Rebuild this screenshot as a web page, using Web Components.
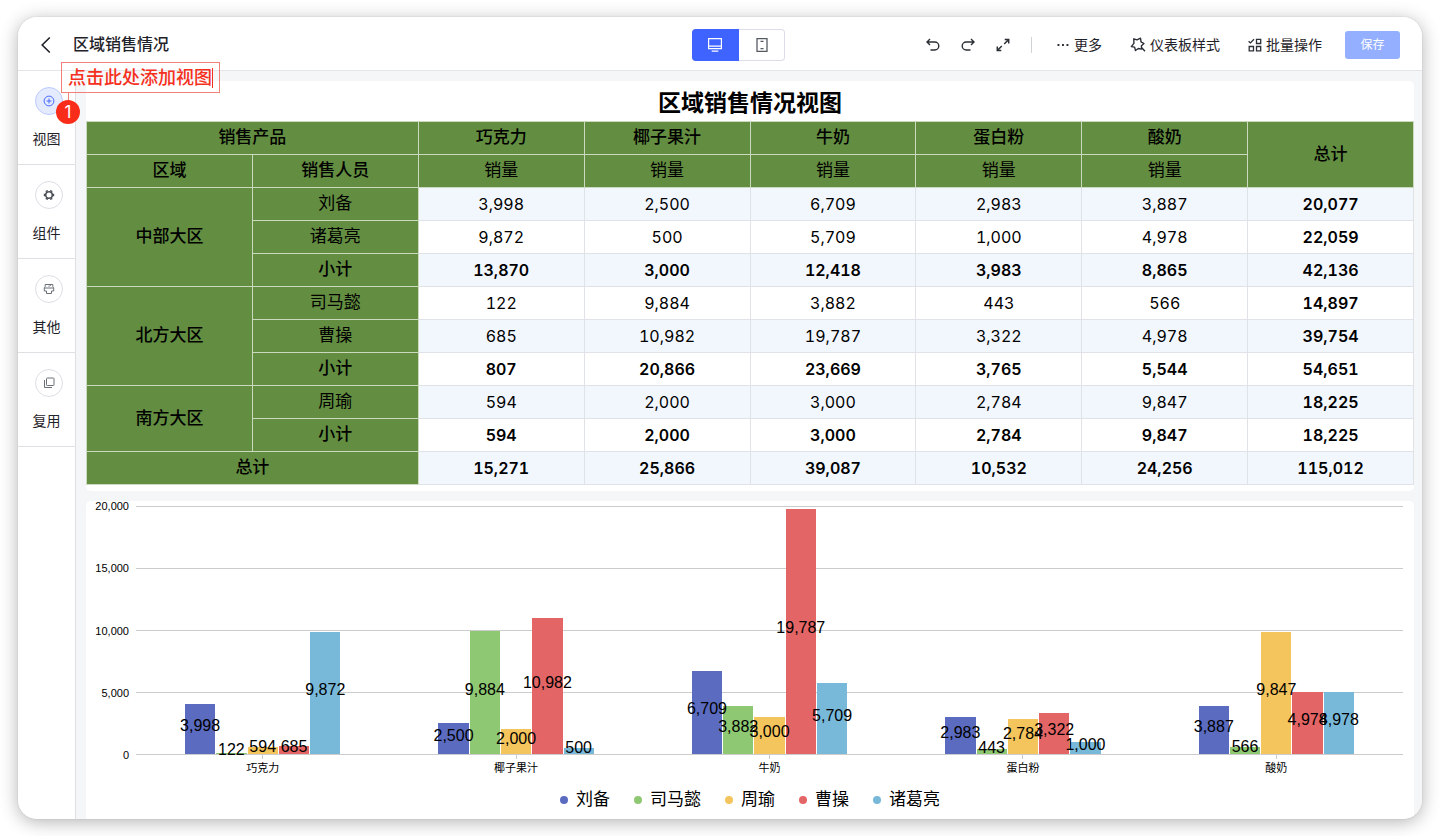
<!DOCTYPE html>
<html lang="zh-CN">
<head>
<meta charset="utf-8">
<meta name="viewport" content="width=device-width, initial-scale=1">
<title>区域销售情况</title>
<style>
  body {
    margin: 0;
    background: #fff;
    color: #1f2329;
    font-family: "Liberation Sans", "Noto Sans CJK SC", sans-serif;
    font-size: 14px;
    line-height: 20px;
  }
</style>
</head>
<body>
<dashboard-app></dashboard-app>

<template id="dashboard-app">
  <style>
    :host { display: flex; box-sizing: border-box; min-height: 100vh; padding: 17px 18px; }
    .window {
      flex: 1; min-width: 0; display: flex; flex-direction: column; overflow: hidden;
      border-radius: 19px; background: #fff;
      box-shadow: 0 0 1px rgba(0,0,0,.3), 0 3px 18px rgba(0,0,0,.3);
    }
    .body { flex: 1; display: flex; min-height: 0; }
    nav { flex: none; width: 57px; border-right: 1px solid #dee0e3; background: #fff; }
    main {
      flex: 1; min-width: 0; display: flex; flex-direction: column; gap: 10px;
      padding: 10px 8px 0 10px; background: #f5f6f8;
    }
  </style>
  <div class="window">
    <app-header></app-header>
    <div class="body">
      <nav aria-label="添加">
        <side-item active>
          <svg slot="icon" width="12" height="12" viewBox="0 0 12 12" fill="none" stroke="#4a6bff" stroke-width="1"><circle cx="6" cy="6" r="4.9"/><path d="M6 3.500v5M3.500 6h5"/></svg>
          视图
        </side-item>
        <side-item>
          <svg slot="icon" width="12" height="12" viewBox="0 0 12 12" fill="none" stroke="#4b5058"><circle cx="6" cy="6" r="3.300" stroke-width="1.600"/><path stroke-width="2.400" d="M3.400 1.500l.7 1.200M8.600 1.500l-.7 1.200M3.400 10.500l.7-1.200M8.600 10.500l-.7-1.200M.8 6h1.500M9.700 6h1.500"/></svg>
          组件
        </side-item>
        <side-item>
          <svg slot="icon" width="12" height="12" viewBox="0 0 12 12" fill="none" stroke="#6b7078" stroke-width="1" stroke-linejoin="round"><path d="M2.200 1.500h7.600v2.300l.9.900V8H8.500v2.500h-5V8H1.300V4.700l.9-.9zM1.500 5h9M5.500 3.200h1l1.500-1.500"/></svg>
          其他
        </side-item>
        <side-item>
          <svg slot="icon" width="12" height="12" viewBox="0 0 12 12" fill="none" stroke="#6b7078" stroke-width="1"><rect x="3.500" y="1" width="7.500" height="7.500" rx=".8"/><path d="M1.500 3v7.500h7.500"/></svg>
          复用
        </side-item>
      </nav>
      <main>
        <pivot-table></pivot-table>
        <bar-chart></bar-chart>
      </main>
    </div>
  </div>
  <step-callout step="1">点击此处添加视图</step-callout>
</template>

<template id="app-header">
  <style>
    :host {
      flex: none; display: flex; align-items: center; box-sizing: border-box; height: 54px;
      padding-top: 2px; border-bottom: 1px solid #e3e5e8; background: #fff;
    }
    button { margin: 0; padding: 0; border: 0; background: none; font: inherit; color: inherit; display: flex; align-items: center; justify-content: center; }
    svg { display: block; }
    .lead { flex: none; box-sizing: border-box; width: 48%; padding-left: 20px; display: flex; align-items: center; gap: 19px; }
    h1 { margin: 0; font-size: 16px; line-height: 24px; font-weight: 500; }
    .device { flex: none; display: flex; border-radius: 4px; overflow: hidden; box-shadow: inset 0 0 0 1px #dcdde8; }
    .device button { width: 46px; height: 32px; }
    .device .on { width: 47px; background: #3e63ff; }
    .tools { margin-left: auto; padding-right: 22px; display: flex; align-items: center; }
    .history { display: flex; gap: 19px; }
    .rule { width: 1px; height: 16px; margin: 0 24px 0 20px; background: #d0d3d6; }
    .actions { display: flex; gap: 28px; }
    .actions button { gap: 4px; }
    .save { width: 55px; height: 28px; margin-left: 23px; border-radius: 3px; background: #94afff; color: #fff; font-size: 12px; }
  </style>
  <div class="lead">
    <button type="button" aria-label="返回">
      <svg width="16" height="18" viewBox="0 0 16 18" fill="none" stroke="#1f2329" stroke-width="1.600"><path d="M11.800 1.500 4.200 9l7.600 7.500"/></svg>
    </button>
    <h1>区域销售情况</h1>
  </div>
  <div class="device" role="group" aria-label="预览设备">
    <button type="button" class="on" aria-label="电脑端" aria-pressed="true">
      <svg width="14" height="14" viewBox="0 0 14 14" fill="none" stroke="#fff" stroke-width="1.200"><path d="M.6.700h12.800v10H.6zM.6 8.200h12.800M3.700 13.200h6.600"/></svg>
    </button>
    <button type="button" aria-label="手机端" aria-pressed="false">
      <svg width="12" height="14" viewBox="0 0 12 14" fill="none" stroke="#555a61" stroke-width="1.300"><path d="M1 .7h10v12.600H1zM4.500 3.400h3M4.500 10.700h3"/></svg>
    </button>
  </div>
  <div class="tools">
    <div class="history">
      <button type="button" aria-label="撤销">
        <svg width="16" height="16" viewBox="0 0 16 16" fill="none" stroke="#2b2f36" stroke-width="1.400"><path d="M5 2 2 5l3 3M2.200 5h7.600a4 4 0 0 1 0 8H5.500"/></svg>
      </button>
      <button type="button" aria-label="重做">
        <svg width="16" height="16" viewBox="0 0 16 16" fill="none" stroke="#2b2f36" stroke-width="1.400"><path d="m11 2 3 3-3 3M13.800 5H6.200a4 4 0 0 0 0 8h4.300"/></svg>
      </button>
      <button type="button" aria-label="全屏">
        <svg width="16" height="16" viewBox="0 0 16 16" fill="none" stroke="#2b2f36" stroke-width="1.500"><path d="M9.700 2.500h4v4M13.700 2.500 9.200 7M6.300 13.500h-4v-4M2.300 13.500 6.800 9"/></svg>
      </button>
    </div>
    <span class="rule"></span>
    <div class="actions">
      <button type="button">
        <svg width="14" height="14" viewBox="0 0 14 14" fill="#2b2f36"><path d="M1.500 6h1.900v1.900H1.500zM6 6h1.900v1.900H6zM10.500 6h1.900v1.900h-1.900z"/></svg>
        <span>更多</span>
      </button>
      <button type="button">
        <svg width="16" height="16" viewBox="0 0 16 16" fill="none" stroke="#2b2f36" stroke-width="1.400" stroke-linejoin="round"><path d="m3.800 1.800 3.200 1.100 3.500-1.700.5 3.600 3 1.700-2.600 2.200.2 3.400-3.300-.6-2.800 2-.9-3.400-3.300-.5 2.600-3.200zM11.300 10.300l3.700 3.900"/></svg>
        <span>仪表板样式</span>
      </button>
      <button type="button">
        <svg width="14" height="14" viewBox="0 0 14 14" fill="none" stroke="#2b2f36" stroke-width="1.300"><path d="m.6 3.200 1.800 1.700L6 1.300M8.500 1.300h4.200v4.200H8.500zM1.200 8.500h4.300v4.300H1.200zM8.500 8.500h4.200v4.300H8.500z"/></svg>
        <span>批量操作</span>
      </button>
    </div>
    <button type="button" class="save">保存</button>
  </div>
</template>

<template id="side-item">
  <style>
    :host { display: block; box-sizing: border-box; height: 94px; border-bottom: 1px solid #dee0e3; }
    button {
      box-sizing: border-box; width: 100%; height: 100%; margin: 0; padding: 16px 0 10px; border: 0; background: none;
      font: inherit; color: inherit; display: flex; flex-direction: column; align-items: center; gap: 14px;
    }
    .ring {
      box-sizing: border-box; width: 28px; height: 28px; margin-left: 4px; border: 1px solid #dcdee6; border-radius: 50%;
      display: flex; align-items: center; justify-content: center;
    }
    :host([active]) .ring { background: #e4ebff; border-color: #bccbff; }
  </style>
  <button type="button"><span class="ring"><slot name="icon"></slot></span><span><slot></slot></span></button>
</template>

<template id="pivot-table">
  <style>
    :host { display: block; padding-bottom: 6px; border-radius: 5px; background: #fff; color: #000; }
    h2 { margin: 0; padding: 6px 0 2px; font-size: 23px; line-height: 32px; font-weight: 700; text-align: center; }
    table { width: 100%; table-layout: fixed; border-collapse: collapse; font-size: 17px; line-height: 24px; text-align: center; }
    th, td { box-sizing: border-box; height: 33px; padding: 0; border: 1px solid #dfe2e6; }
    th { background: #638e41; border-color: #cbd9bf; font-weight: 500; }
    th.plain { font-weight: 400; }
    td { font-family: Inter, "Noto Sans CJK SC", sans-serif; font-size: 16px; font-variant-numeric: tabular-nums; }
    tbody tr:nth-child(odd) td { background: #f2f7fe; }
    .sum td, td:last-child { font-weight: 600; }
  </style>
  <h2>区域销售情况视图</h2>
  <table aria-label="区域销售情况视图"><thead></thead><tbody></tbody></table>
</template>

<template id="bar-chart">
  <style>
    :host { flex: 1; display: block; padding: 5px 11px 0 0; border-radius: 5px 5px 0 0; background: #fff; color: #000; }
    .chart { display: grid; grid-template-columns: 43px 1fr; column-gap: 7px; }
    .scale { display: flex; flex-direction: column; justify-content: space-between; margin: -7px 0; font-size: 11px; line-height: 14px; text-align: right; }
    .plot { display: flex; height: 249px; background: repeating-linear-gradient(to top, #ccc 0 1px, transparent 1px 62px); }
    .group { flex: 1; display: flex; align-items: flex-end; gap: 1px; padding: 0 49px 1px; }
    .bar { position: relative; flex: 1; background: var(--tone); }
    .bar span {
      position: absolute; z-index: 1; top: 50%; left: 50%; transform: translate(-50%, -50%);
      padding-bottom: 6px; font-size: 16px; line-height: 20px;
    }
    .names { grid-column: 2; display: flex; font-size: 11px; line-height: 18px; text-align: center; }
    .names div { flex: 1; display: flex; flex-direction: column; align-items: center; }
    .names div::before { content: ""; width: 1px; height: 4px; background: #ccc; }
    .legend { display: flex; justify-content: center; gap: 24px; margin: 10px 0 0 11px; padding: 0 0 6px; list-style: none; font-size: 17px; line-height: 26px; }
    .legend li { display: flex; align-items: center; gap: 8px; }
    .legend li::before { content: ""; width: 8px; height: 8px; border-radius: 50%; background: var(--tone); }
  </style>
  <div class="chart">
    <div class="scale"></div>
    <div class="plot"></div>
    <div class="names"></div>
  </div>
  <ul class="legend"></ul>
</template>

<template id="step-callout">
  <style>
    :host { position: absolute; top: 62px; left: 61px; color: #f5301c; }
    .note { display: flex; align-items: center; box-sizing: border-box; height: 31px; padding: 0 6px; border: 1px solid #f08078; font-size: 18px; line-height: 28px; font-weight: 500; }
    .note::after { content: ""; width: 1px; height: 20px; background: currentColor; }
    .pin { display: flex; flex-direction: column; align-items: center; width: 24px; margin-left: -5px; }
    .pin::before { content: ""; width: 1px; height: 7px; background: #f08078; }
    .pin b { width: 24px; height: 24px; border-radius: 50%; background: #f92c19; color: #fff; font: 400 17px/24px Inter, sans-serif; text-align: center; }
  </style>
  <div class="note"><slot></slot></div>
  <div class="pin"><b></b></div>
</template>

<script>
  class TemplateElement extends HTMLElement {
    constructor() {
      super();
      const template = document.getElementById(this.constructor.tag);
      this.attachShadow({ mode: "open" }).append(template.content.cloneNode(true));
    }
    find(selector) { return this.shadowRoot.querySelector(selector); }
    static register(tag) { this.tag = tag; customElements.define(tag, this); }
  }

  const products = ["巧克力", "椰子果汁", "牛奶", "蛋白粉", "酸奶"];
  const rows = [
    { area: "中部大区", span: 3, name: "刘备", values: [3998, 2500, 6709, 2983, 3887, 20077] },
    { name: "诸葛亮", values: [9872, 500, 5709, 1000, 4978, 22059] },
    { name: "小计", sum: true, values: [13870, 3000, 12418, 3983, 8865, 42136] },
    { area: "北方大区", span: 3, name: "司马懿", values: [122, 9884, 3882, 443, 566, 14897] },
    { name: "曹操", values: [685, 10982, 19787, 3322, 4978, 39754] },
    { name: "小计", sum: true, values: [807, 20866, 23669, 3765, 5544, 54651] },
    { area: "南方大区", span: 2, name: "周瑜", values: [594, 2000, 3000, 2784, 9847, 18225] },
    { name: "小计", sum: true, values: [594, 2000, 3000, 2784, 9847, 18225] },
    { total: "总计", sum: true, values: [15271, 25866, 39087, 10532, 24256, 115012] }
  ];
  const series = [
    { name: "刘备", tone: "#5a6bc0" },
    { name: "司马懿", tone: "#8fc873" },
    { name: "周瑜", tone: "#f4c55c" },
    { name: "曹操", tone: "#e46565" },
    { name: "诸葛亮", tone: "#78b9da" }
  ];
  const format = n => n.toLocaleString("en-US");

  class PivotTable extends TemplateElement {
    connectedCallback() {
      this.find("thead").innerHTML =
        `<tr><th colspan="2">销售产品</th>${products.map(p => `<th>${p}</th>`).join("")}<th rowspan="2">总计</th></tr>` +
        `<tr><th>区域</th><th>销售人员</th>${products.map(() => `<th class="plain">销量</th>`).join("")}</tr>`;
      this.find("tbody").innerHTML = rows.map(r => {
        const area = r.area ? `<th scope="rowgroup" rowspan="${r.span}">${r.area}</th>` : "";
        const name = r.total ? `<th scope="row" colspan="2">${r.total}</th>`
          : `<th scope="row"${r.sum ? "" : ' class="plain"'}>${r.name}</th>`;
        return `<tr${r.sum ? ' class="sum"' : ""}>${area}${name}${r.values.map(v => `<td>${format(v)}</td>`).join("")}</tr>`;
      }).join("");
    }
  }

  class BarChart extends TemplateElement {
    connectedCallback() {
      const max = 20000;
      this.find(".scale").innerHTML = [20000, 15000, 10000, 5000, 0].map(v => `<span>${format(v)}</span>`).join("");
      this.find(".plot").innerHTML = products.map((p, i) => `<div class="group">${series.map(s => {
        const value = rows.find(r => r.name === s.name).values[i];
        return `<div class="bar" style="--tone:${s.tone};height:${value / max * 100}%"><span>${format(value)}</span></div>`;
      }).join("")}</div>`).join("");
      this.find(".names").innerHTML = products.map(p => `<div>${p}</div>`).join("");
      this.find(".legend").innerHTML = series.map(s => `<li style="--tone:${s.tone}">${s.name}</li>`).join("");
    }
  }

  class StepCallout extends TemplateElement {
    connectedCallback() { this.find("b").textContent = this.getAttribute("step"); }
  }

  (class extends TemplateElement {}).register("app-header");
  (class extends TemplateElement {}).register("side-item");
  PivotTable.register("pivot-table");
  BarChart.register("bar-chart");
  StepCallout.register("step-callout");
  (class extends TemplateElement {}).register("dashboard-app");
</script>
</body>
</html>
